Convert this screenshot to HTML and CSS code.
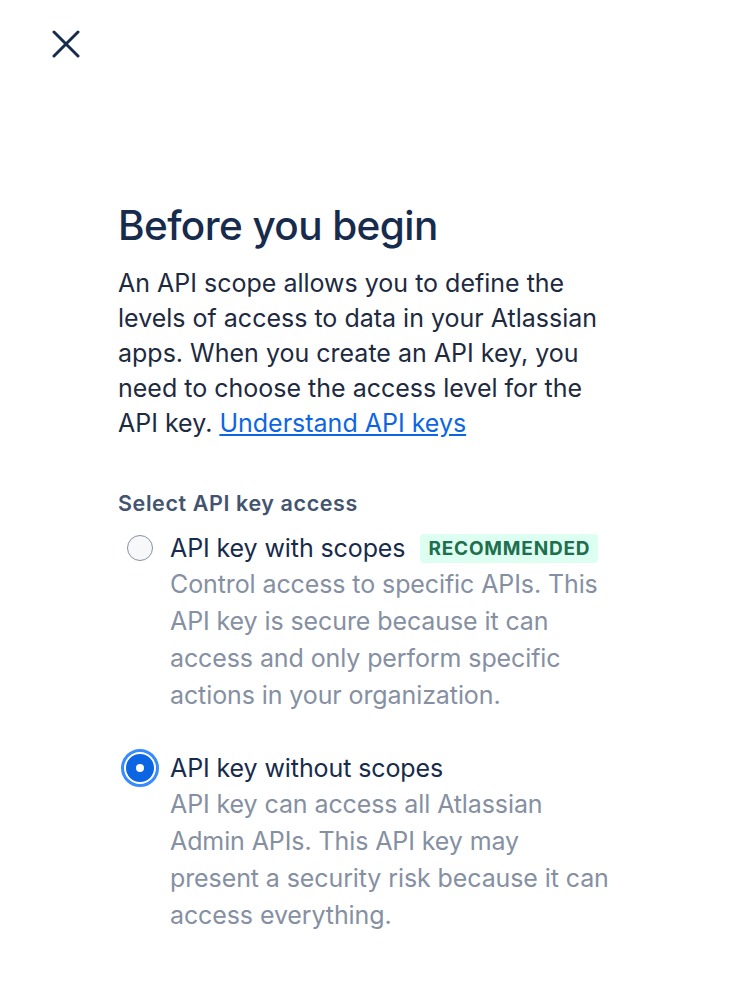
FILE: index.html
```html
<!DOCTYPE html>
<html>
<head>
  <title>Before you begin</title>
  <link rel="stylesheet" href="styles.css">
</head>
<body>
  <button class="close" aria-label="Close">
    <svg width="28" height="28" viewBox="0 0 28 28">
      <path d="M2 2 L26 26 M26 2 L2 26" stroke="#172b4d" stroke-width="3" stroke-linecap="round"/>
    </svg>
  </button>

  <main class="content">
    <h1>Before you begin</h1>
    <p class="intro">
      An API scope allows you to define the levels of access to data in your Atlassian apps.
      When you create an API key, you need to choose the access level for the API key.
      <a href="#">Understand API keys</a>
    </p>

    <fieldset class="access">
      <legend>Select API key access</legend>

      <label class="option">
        <input type="radio" name="access" value="scoped">
        <span class="radio"></span>
        <span class="option-text">
          <span class="option-title">API key with scopes <span class="badge">RECOMMENDED</span></span>
          <span class="option-desc">Control access to specific APIs. This API key is secure because it can access and only perform specific actions in your organization.</span>
        </span>
      </label>

      <label class="option">
        <input type="radio" name="access" value="unscoped" checked>
        <span class="radio"></span>
        <span class="option-text">
          <span class="option-title">API key without scopes</span>
          <span class="option-desc">API key can access all Atlassian Admin APIs. This API key may present a security risk because it can access everything.</span>
        </span>
      </label>
    </fieldset>
  </main>
</body>
</html>
```

FILE: styles.css
```css
body {
  margin: 0;
  font-family: Inter, "Noto Sans", sans-serif;
  color: #172b4d;
  background: #fff;
}
.close {
  display: block;
  margin: 30px 0 0 52px;
  padding: 0;
  width: 28px;
  height: 28px;
  border: none;
  background: none;
}
.content {
  width: 502px;
  margin: 0 0 0 118px;
  padding-top: 143px;
}
h1 {
  margin: 0;
  font-size: 40.5px;
  font-weight: 500;
  letter-spacing: -0.6px;
  line-height: 50px;
}
.intro {
  margin: 15px 0 0;
  font-size: 25px;
  letter-spacing: 0;
  line-height: 35px;
  color: #1d2a3f;
}
.intro a {
  color: #0c66e4;
}
.access {
  margin: 48px 0 0;
  padding: 0;
  border: none;
}
.access legend {
  padding: 0;
  font-size: 21.5px;
  font-weight: 600;
  letter-spacing: 0.6px;
  color: #44546f;
  line-height: 28px;
}
.option {
  display: flex;
  gap: 11px;
  margin-left: 3px;
  margin-top: 13px;
}
.option + .option {
  margin-top: 36px;
}
.option input {
  display: none;
}
.radio {
  flex: none;
  box-sizing: border-box;
  width: 38px;
  height: 38px;
  margin-top: -1px;
  border-radius: 50%;
  position: relative;
}
.radio::after {
  content: "";
  position: absolute;
  left: 6px;
  top: 6px;
  width: 26px;
  height: 26px;
  box-sizing: border-box;
  border-radius: 50%;
  border: 1.5px solid #8590a2;
  background: #f7f8f9;
}
.option input:checked + .radio {
  border: 3px solid #388bff;
}
.option input:checked + .radio::after {
  left: 2px;
  top: 2px;
  width: 28px;
  height: 28px;
  border: 10px solid #0c66e4;
  background: #fff;
}
.option-text {
  display: flex;
  flex-direction: column;
  max-width: 444px;
}
.option-title {
  display: flex;
  align-items: center;
  gap: 15px;
  font-size: 25px;
  letter-spacing: -0.1px;
  line-height: 36px;
  color: #172b4d;
}
.badge {
  font-size: 19px;
  font-weight: 700;
  letter-spacing: 0.8px;
  line-height: 29px;
  padding: 0 8px;
  border-radius: 4px;
  background: #dcfff1;
  color: #216e4e;
}
.option-desc {
  font-size: 25px;
  letter-spacing: -0.1px;
  line-height: 37px;
  color: #8590a2;
}
```
